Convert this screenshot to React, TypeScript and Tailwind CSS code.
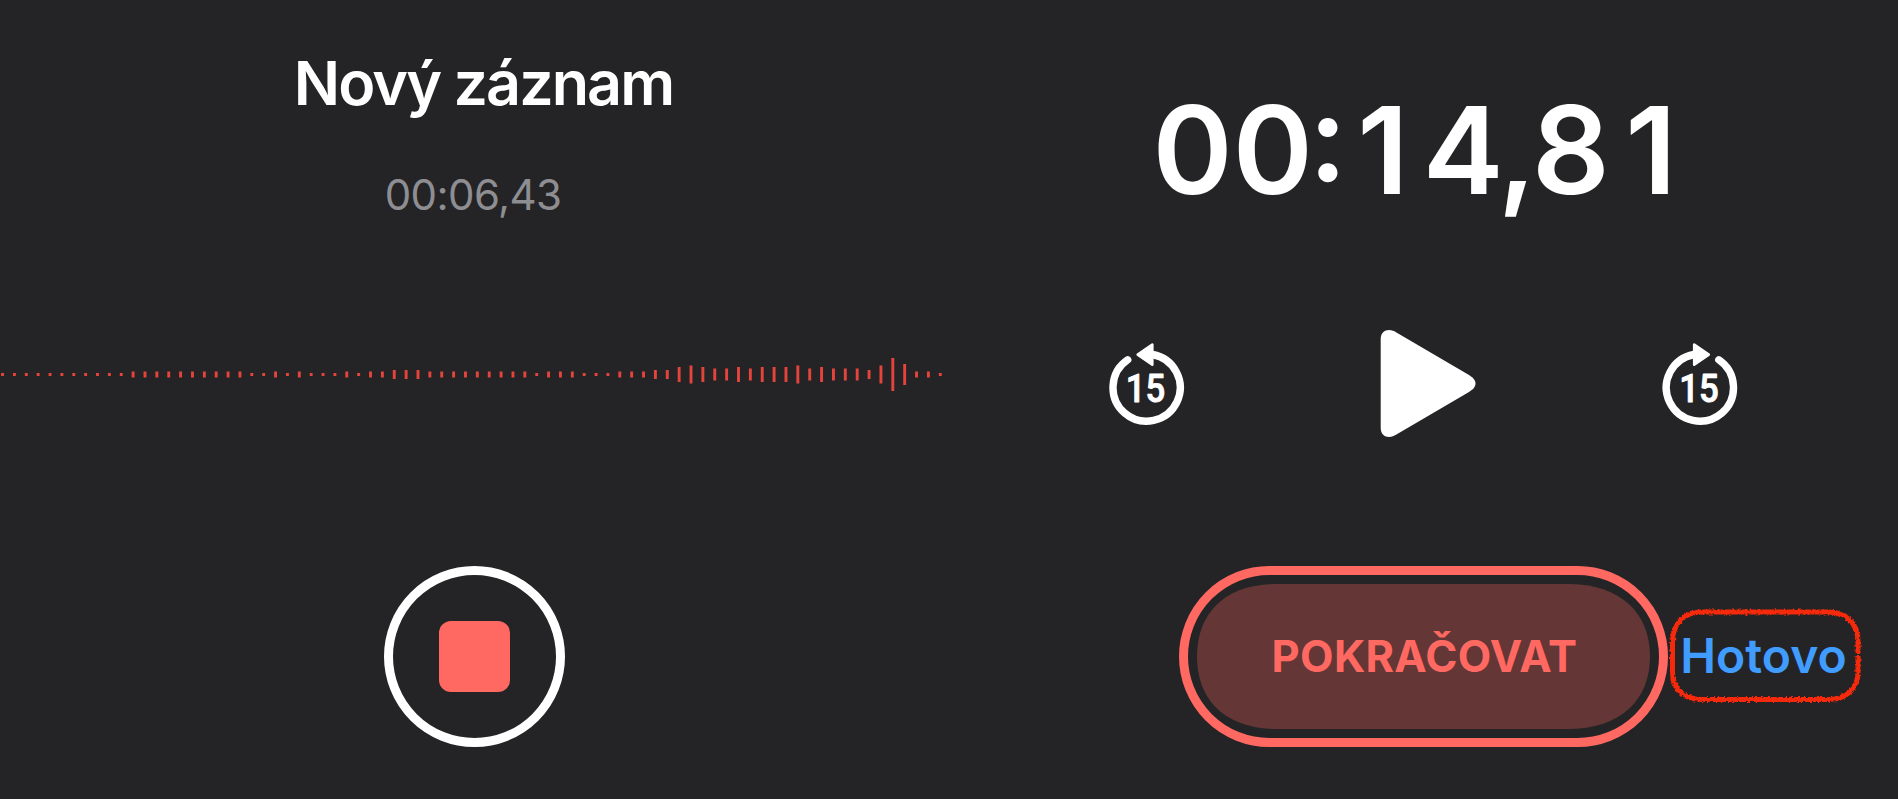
import React from 'react';

/** Voice recorder: the recording view on the left, the paused one on the right. */

// Bar heights in px, oldest sample first
const LEVELS = [
  3, 3, 3, 3, 3, 3, 3, 3, 3, 3,
  3, 6, 6, 6, 6, 6, 6, 6, 6, 6,
  6, 3, 3, 6, 3, 6, 3, 3, 3, 6,
  3, 6, 6, 9, 9, 9, 6, 6, 6, 6,
  6, 6, 6, 6, 6, 3, 6, 6, 6, 3,
  3, 3, 6, 6, 6, 9, 9, 15, 18, 15,
  12, 12, 15, 12, 15, 15, 15, 18, 12, 15,
  12, 12, 12, 9, 18, 33, 21, 6, 6, 3,
];
const STEP = 11.87;

function Waveform() {
  return (
    <svg className="block h-[40px] w-[949px]" viewBox="0 0 949 40" fill="#e5443c">
      {LEVELS.map((h, i) => (
        <rect key={i} x={1.1 + i * STEP} y={19.5 - h / 2} width={2.9} height={h} />
      ))}
    </svg>
  );
}

function SkipButton({ forward = false }: { forward?: boolean }) {
  return (
    <button className="block h-[84px] w-[84px]" aria-label={forward ? '+15 s' : '-15 s'}>
      <svg viewBox="0 0 84 84" className="block h-full w-full" fill="none">
        <g transform={forward ? 'translate(83 0) scale(-1 1)' : 'translate(0.5 0)'}>
          <path d="M22.2 17.8A33.6 33.6 0 1 0 47 12.5" stroke="#fff" strokeWidth="7.4" strokeLinecap="round" />
          <path d="M32.2 12.6L46.8 2.5V22.8Z" fill="#fff" stroke="#fff" strokeWidth="2.6" strokeLinejoin="round" />
        </g>
        <text
          x={forward ? 41 : 40.4}
          y="60.4"
          textAnchor="middle"
          textLength="39.5"
          lengthAdjust="spacingAndGlyphs"
          fill="#fff"
          stroke="#fff"
          strokeWidth="0.9"
          strokeLinejoin="round"
          className="font-['Roboto',sans-serif] text-[38.5px] font-medium"
        >
          15
        </text>
      </svg>
    </button>
  );
}

function RecordingPanel() {
  return (
    <section className="flex flex-col items-center">
      <h1 className="mt-[47px] ml-[18px] h-[72px] text-[61px] leading-[72px] font-semibold tracking-[-1.95px] whitespace-nowrap">
        Nový záznam
      </h1>
      <p className="mt-[46px] mr-[3px] h-[60px] text-[42px] leading-[60px] tracking-[-0.6px] text-[#8e8e92]">00:06,43</p>
      <div className="mt-[130px]">
        <Waveform />
      </div>
      <button
        className="mt-[171px] flex h-[181px] w-[181px] items-center justify-center rounded-full border-[9px] border-white"
        aria-label="Stop"
      >
        <span className="h-[71px] w-[71px] rounded-[12px] bg-[#ff6961]" />
      </button>
    </section>
  );
}

/** Digits sit in equal cells so that the clock does not jump while it counts. */
function BigClock({ value }: { value: string }) {
  return (
    <div className="mt-[70px] ml-[199px] flex h-[160px] text-[121.5px] leading-[160px] font-semibold tracking-[-9px] [font-feature-settings:'case']">
      {value.split('').map((ch, i) => (
        <span
          key={i}
          className={`flex justify-center ${ch === ':' ? 'w-[30px]' : ch === ',' ? 'w-[27.5px]' : 'w-[80.2px]'}`}
        >
          {ch}
        </span>
      ))}
    </div>
  );
}

function PausedPanel() {
  return (
    <section className="flex flex-col">
      <BigClock value="00:14,81" />
      <div className="mt-[100px] ml-[156px] flex h-[107px] w-[637px] items-start justify-between">
        <div className="mt-[12px]"><SkipButton /></div>
        <button className="ml-[9px] h-[107px] w-[96px]" aria-label="Play">
          <svg viewBox="0 0 96 107" className="block h-full w-full" fill="#fff">
            <path d="M.7 9C.7 3 4.5 0 9 0C12 0 14 1 16 2.2L89 45C93 47.5 95.5 50 95.5 53.5C95.5 57 93 59.5 89 62L16 104.8C14 106 12 107 9 107C4.5 107 .7 104 .7 98Z" />
          </svg>
        </button>
        <div className="mt-[12px]"><SkipButton forward /></div>
      </div>
      <div className="mt-[129px] ml-[230px] flex h-[181px] items-center">
        <button className="relative flex h-[181px] w-[489px] shrink-0 items-center justify-center rounded-full border-[9px] border-[#ff6961]">
          <svg viewBox="0 0 453 145" className="absolute top-[9px] left-[9px] h-[145px] w-[453px]" fill="#643636">
            <path d="M80 0H370C425 0 453 30 453 72.5C453 115 425 145 370 145H80C27 145 0 115 0 72.5C0 30 27 0 80 0Z" />
          </svg>
          <span className="relative ml-[2px] text-[43.5px] font-[650] tracking-[0.3px] text-[#ff6961]">POKRAČOVAT</span>
        </button>
        <button className="relative flex h-[94px] w-[192px] shrink-0 items-center justify-center text-[48px] font-semibold text-[#409cff]">
          <span className="-mt-[1px] -ml-[1px]">Hotovo</span>
          {/* hand-drawn marker ring */}
          <svg viewBox="0 0 192 94" className="absolute inset-0 h-full w-full overflow-visible" fill="none">
            <filter id="rough" x="-5%" y="-10%" width="110%" height="120%">
              <feTurbulence type="fractalNoise" baseFrequency="0.4" numOctaves="2" seed="4" />
              <feDisplacementMap in="SourceGraphic" scale="4" xChannelSelector="R" yChannelSelector="G" />
            </filter>
            <path
              d="M190 43V32C190 13 178 2 160 2H34C16 2 4.5 14 4.5 32V62C4.5 79 16 89.500 34 89.500H160C178 89.500 190 79 190 62V46"
              stroke="#f52a0a"
              strokeWidth="5"
              filter="url(#rough)"
            />
          </svg>
        </button>
      </div>
    </section>
  );
}

export default function App() {
  return (
    <main className="grid h-[799px] w-[1898px] grid-cols-2 overflow-hidden bg-[#242426] font-['Inter',sans-serif] text-white">
      <RecordingPanel />
      <PausedPanel />
    </main>
  );
}
